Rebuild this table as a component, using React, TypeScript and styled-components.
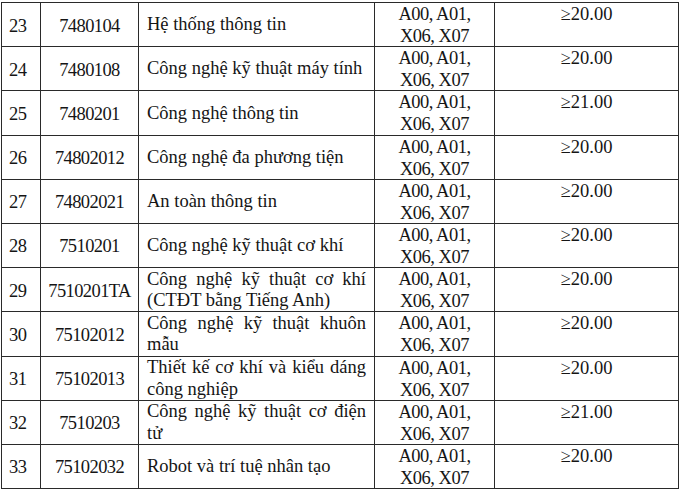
import styled, { createGlobalStyle } from 'styled-components';

type Major = {
  no: number;
  code: string;
  name: string;
  score: string;
};

const majors: Major[] = [
  { no: 23, code: '7480104', name: 'Hệ thống thông tin', score: '20.00' },
  { no: 24, code: '7480108', name: 'Công nghệ kỹ thuật máy tính', score: '20.00' },
  { no: 25, code: '7480201', name: 'Công nghệ thông tin', score: '21.00' },
  { no: 26, code: '74802012', name: 'Công nghệ đa phương tiện', score: '20.00' },
  { no: 27, code: '74802021', name: 'An toàn thông tin', score: '20.00' },
  { no: 28, code: '7510201', name: 'Công nghệ kỹ thuật cơ khí', score: '20.00' },
  {
    no: 29,
    code: '7510201TA',
    name: 'Công nghệ kỹ thuật cơ khí (CTĐT bằng Tiếng Anh)',
    score: '20.00',
  },
  { no: 30, code: '75102012', name: 'Công nghệ kỹ thuật khuôn mẫu', score: '20.00' },
  {
    no: 31,
    code: '75102013',
    name: 'Thiết kế cơ khí và kiểu dáng công nghiệp',
    score: '20.00',
  },
  { no: 32, code: '7510203', name: 'Công nghệ kỹ thuật cơ điện tử', score: '21.00' },
  { no: 33, code: '75102032', name: 'Robot và trí tuệ nhân tạo', score: '20.00' },
];

function App() {
  return (
    <>
      <GlobalStyle />
      <Page>
        <Sheet>
          {majors.map((m) => (
            <Row key={m.no}>
              <NoCell>{m.no}</NoCell>
              <CodeCell>{m.code}</CodeCell>
              <NameCell>
                <NameText>{m.name}</NameText>
              </NameCell>
              <GroupCell>
                A00, A01,
                <br />
                X06, X07
              </GroupCell>
              <ScoreCell>≥{m.score}</ScoreCell>
            </Row>
          ))}
        </Sheet>
      </Page>
    </>
  );
}

const GlobalStyle = createGlobalStyle`
  html, body {
    margin: 0;
    padding: 0;
    background: #ffffff;
  }
`;

const Page = styled.div`
  width: 680px;
  height: 491px;
  padding: 2px 0 0 1px;
  box-sizing: border-box;
  overflow: hidden;
  font-family: 'Liberation Serif', 'Times New Roman', serif;
  font-size: 18.5px;
  line-height: 22px;
  color: #151515;
`;

const Sheet = styled.div`
  width: 678px;
  border-top: 1.3px solid #2a2a2a;
  border-left: 1.3px solid #2a2a2a;
  box-sizing: border-box;
`;

const Row = styled.div`
  display: grid;
  grid-template-columns: 39px 98px 236px 120px 184px;
  height: 44.2px;
  box-sizing: border-box;
  border-bottom: 1.3px solid #2a2a2a;
`;

const Cell = styled.div`
  display: flex;
  box-sizing: border-box;
  border-right: 1.3px solid #2a2a2a;
  min-width: 0;
`;

const NoCell = styled(Cell)`
  align-items: center;
  padding-left: 7px;
  padding-top: 1px;
  letter-spacing: -0.4px;
`;

const CodeCell = styled(Cell)`
  align-items: center;
  justify-content: center;
  padding-top: 1px;
  letter-spacing: -0.6px;
`;

const NameCell = styled(Cell)`
  align-items: center;
  padding: 0 8px;
`;

const NameText = styled.span`
  flex: 1;
  text-align: justify;
  line-height: 21.5px;
`;

const GroupCell = styled(Cell)`
  display: block;
  text-align: center;
  letter-spacing: -0.5px;
  line-height: 22px;
  padding-top: 0;
`;

const ScoreCell = styled(Cell)`
  display: block;
  text-align: center;
  padding-top: 0;
`;

export default App;
